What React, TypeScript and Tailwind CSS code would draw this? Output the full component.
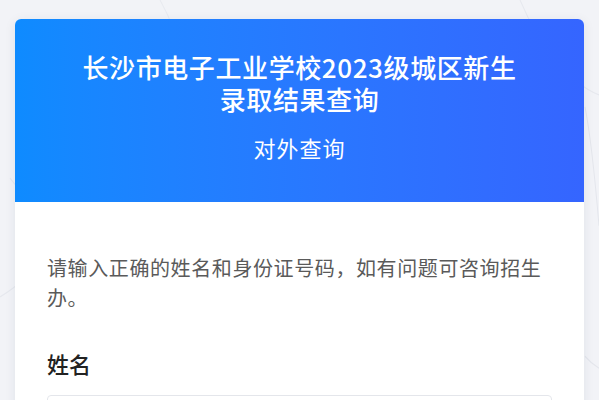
import React from 'react';

const cjk = { fontFamily: '"Noto Sans CJK SC", "Noto Sans", sans-serif' };

function BackgroundLines() {
  return (
    <svg className="absolute inset-0 h-full w-full" viewBox="0 0 599 400" preserveAspectRatio="none" fill="none">
      <path d="M0 250 C 40 230, 60 200, 10 150" stroke="#e6e8ee" strokeWidth="1" />
      <path d="M160 0 C 180 30, 190 60, 170 110" stroke="#e8eaf0" strokeWidth="1" />
      <path d="M520 0 C 540 40, 570 70, 599 80" stroke="#e6e8ee" strokeWidth="1" />
      <path d="M585 90 C 592 120, 596 160, 599 190" stroke="#e4e6ec" strokeWidth="1" />
      <path d="M585 300 C 590 305, 595 308, 599 310" stroke="#e4e6ec" strokeWidth="1" />
    </svg>
  );
}

export default function App() {
  return (
    <div className="relative min-h-[400px] w-full overflow-hidden bg-[#f2f3f7]" style={cjk}>
      <BackgroundLines />
      <div className="relative mx-[15px] pt-[19px]">
        <div className="overflow-hidden rounded-md bg-white shadow-[0_2px_12px_rgba(30,40,80,0.08)]">
          {/* 头部 */}
          <div className="bg-gradient-to-r from-[#0e8bff] to-[#3565ff] px-16 pt-[32px] pb-[40px] text-center text-white">
            <h1 className="text-[26px] leading-[32px] font-medium tracking-[0.6px]">
              长沙市电子工业学校2023级城区新生录取结果查询
            </h1>
            <p className="mt-[17px] text-[22px] leading-[30px] tracking-[1px]">对外查询</p>
          </div>

          {/* 表单 */}
          <div className="px-8 pt-[51px] pb-8">
            <p className="text-[20px] leading-[30px] tracking-[0.6px] text-[#5a5a5a]">
              请输入正确的姓名和身份证号码，如有问题可咨询招生办。
            </p>
            <label className="mt-[35px] block text-[22px] leading-[30px] font-medium text-[#222222]">姓名</label>
            <input
              className="mt-[17px] h-[48px] w-full rounded border border-[#e4e6eb] px-4 text-[18px] outline-none"
              placeholder=""
            />
          </div>
        </div>
      </div>
    </div>
  );
}
